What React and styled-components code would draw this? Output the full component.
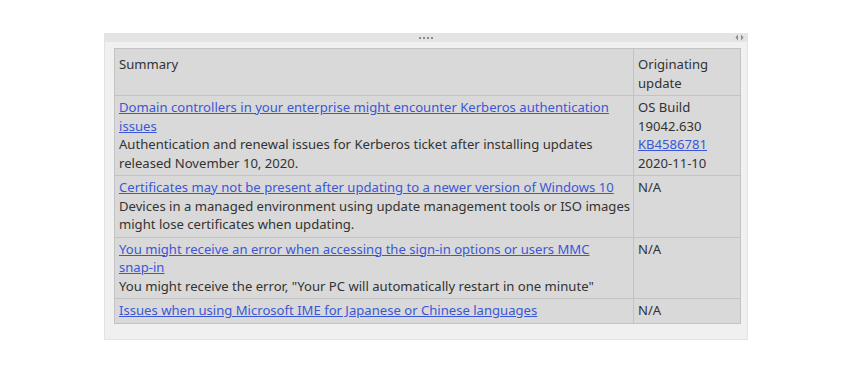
import React from "react";
import styled, { createGlobalStyle } from "styled-components";

const Global = createGlobalStyle`
  html, body { margin: 0; padding: 0; background: #ffffff; }
  body { font-family: "Noto Sans", "Open Sans", sans-serif; }
`;

const Page = styled.div`
  padding: 33px 0 0 104px;
`;

const Panel = styled.div`
  width: 644px;
  box-sizing: border-box;
  background: #f0f0f0;
  border: 1px solid #e2e2e2;
  border-top: none;
  display: flex;
  flex-direction: column;
`;

const TopBar = styled.div`
  height: 9px;
  background: #e4e4e4;
  position: relative;
  display: flex;
  align-items: center;
  justify-content: center;
  gap: 2px;
`;

const Dot = styled.span`
  width: 2px;
  height: 2px;
  background: #8c8c8c;
`;

const Arrows = styled.svg`
  position: absolute;
  right: 3px;
  top: 1px;
`;

const Body = styled.div`
  padding: 6px 6px 15px 9px;
`;

const Table = styled.table`
  border-collapse: collapse;
  width: 627px;
  background: #d9d9d9;
  font-size: 13.1px;
  line-height: 18.5px;
  color: #333333;
`;

const Cell = styled.td`
  border: 1px solid #c3c3c3;
  padding: 2px 1px 3px 4px;
  vertical-align: top;
  width: ${(p) => (p.$narrow ? "101px" : "auto")};
`;

const Head = styled(Cell).attrs({ as: "th" })`
  font-weight: normal;
  text-align: left;
  padding: 6px 1px 3px 4px;
`;

const Link = styled.a`
  color: #3b57d6;
  text-decoration: underline;
  display: ${(p) => (p.$block ? "block" : "inline")};
`;

const NoWrap = styled.span`
  white-space: nowrap;
`;

const rows = [
  {
    title: "Domain controllers in your enterprise might encounter Kerberos authentication issues",
    desc: "Authentication and renewal issues for Kerberos ticket after installing updates released November 10, 2020.",
    origin: (
      <>
        OS Build
        <br />
        19042.630
        <br />
        <Link href="#">KB4586781</Link>
        <br />
        2020-11-10
      </>
    ),
  },
  {
    title: "Certificates may not be present after updating to a newer version of Windows 10",
    desc: "Devices in a managed environment using update management tools or ISO images might lose certificates when updating.",
    origin: "N/A",
  },
  {
    title: (
      <>
        You might receive an error when accessing the <NoWrap>sign-in</NoWrap> options or users MMC{" "}
        <NoWrap>snap-in</NoWrap>
      </>
    ),
    desc: "You might receive the error, \"Your PC will automatically restart in one minute\"",
    origin: "N/A",
  },
  {
    title: "Issues when using Microsoft IME for Japanese or Chinese languages",
    desc: null,
    origin: "N/A",
  },
];

export default function App() {
  return (
    <>
      <Global />
      <Page>
        <Panel>
          <TopBar>
            <Dot />
            <Dot />
            <Dot />
            <Dot />
            <Arrows width="9" height="7" viewBox="0 0 9 7">
              <path d="M3 0.5 L0.5 3.5 L3 6.5 Z" fill="#8c8c8c" />
              <path d="M6 0.5 L8.5 3.5 L6 6.5 Z" fill="#8c8c8c" />
            </Arrows>
          </TopBar>
          <Body>
            <Table>
              <thead>
                <tr>
                  <Head>Summary</Head>
                  <Head $narrow>
                    Originating
                    <br />
                    update
                  </Head>
                </tr>
              </thead>
              <tbody>
                {rows.map((r, i) => (
                  <tr key={i}>
                    <Cell>
                      <Link href="#" $block>
                        {r.title}
                      </Link>
                      {r.desc}
                    </Cell>
                    <Cell $narrow>{r.origin}</Cell>
                  </tr>
                ))}
              </tbody>
            </Table>
          </Body>
        </Panel>
      </Page>
    </>
  );
}
